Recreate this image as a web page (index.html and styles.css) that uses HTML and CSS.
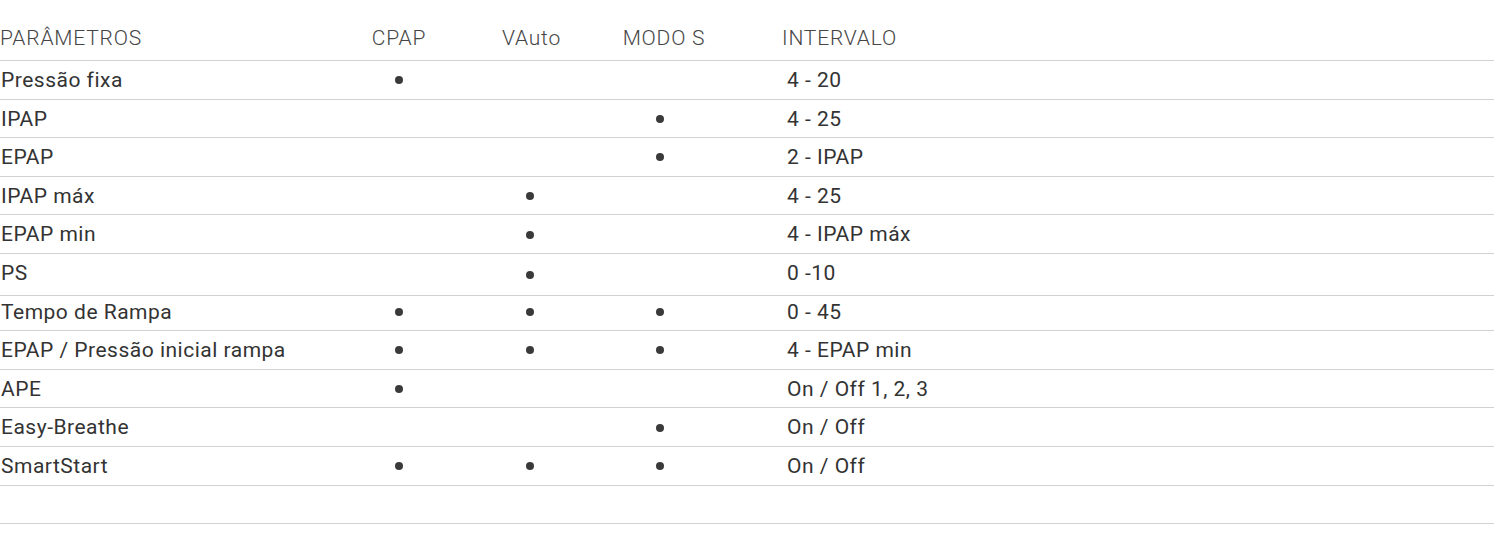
FILE: index.html
```html
<!DOCTYPE html>
<html lang="pt">
<head>
<meta charset="utf-8">
<title>Parâmetros</title>
<link rel="stylesheet" href="styles.css">
</head>
<body>
<div class="table">
  <div class="row head">
    <div class="c name">PARÂMETROS</div>
    <div class="c mode">CPAP</div>
    <div class="c mode m2">VAuto</div>
    <div class="c mode m3">MODO S</div>
    <div class="c range">INTERVALO</div>
  </div>
  <div class="row">
    <div class="c name">Pressão fixa</div>
    <div class="c mode"><span class="dot"></span></div>
    <div class="c mode"></div>
    <div class="c mode"></div>
    <div class="c range">4 - 20</div>
  </div>
  <div class="row">
    <div class="c name">IPAP</div>
    <div class="c mode"></div>
    <div class="c mode"></div>
    <div class="c mode"><span class="dot"></span></div>
    <div class="c range">4 - 25</div>
  </div>
  <div class="row">
    <div class="c name">EPAP</div>
    <div class="c mode"></div>
    <div class="c mode"></div>
    <div class="c mode"><span class="dot"></span></div>
    <div class="c range">2 - IPAP</div>
  </div>
  <div class="row">
    <div class="c name">IPAP máx</div>
    <div class="c mode"></div>
    <div class="c mode"><span class="dot"></span></div>
    <div class="c mode"></div>
    <div class="c range">4 - 25</div>
  </div>
  <div class="row">
    <div class="c name">EPAP min</div>
    <div class="c mode"></div>
    <div class="c mode"><span class="dot"></span></div>
    <div class="c mode"></div>
    <div class="c range">4 - IPAP máx</div>
  </div>
  <div class="row tall">
    <div class="c name">PS</div>
    <div class="c mode"></div>
    <div class="c mode"><span class="dot"></span></div>
    <div class="c mode"></div>
    <div class="c range">0 -10</div>
  </div>
  <div class="row short">
    <div class="c name">Tempo de Rampa</div>
    <div class="c mode"><span class="dot"></span></div>
    <div class="c mode"><span class="dot"></span></div>
    <div class="c mode"><span class="dot"></span></div>
    <div class="c range">0 - 45</div>
  </div>
  <div class="row">
    <div class="c name">EPAP / Pressão inicial rampa</div>
    <div class="c mode"><span class="dot"></span></div>
    <div class="c mode"><span class="dot"></span></div>
    <div class="c mode"><span class="dot"></span></div>
    <div class="c range">4 - EPAP min</div>
  </div>
  <div class="row">
    <div class="c name">APE</div>
    <div class="c mode"><span class="dot"></span></div>
    <div class="c mode"></div>
    <div class="c mode"></div>
    <div class="c range">On / Off 1, 2, 3</div>
  </div>
  <div class="row">
    <div class="c name">Easy-Breathe</div>
    <div class="c mode"></div>
    <div class="c mode"></div>
    <div class="c mode"><span class="dot"></span></div>
    <div class="c range">On / Off</div>
  </div>
  <div class="row">
    <div class="c name">SmartStart</div>
    <div class="c mode"><span class="dot"></span></div>
    <div class="c mode"><span class="dot"></span></div>
    <div class="c mode"><span class="dot"></span></div>
    <div class="c range">On / Off</div>
  </div>
  <div class="row">
    <div class="c name"></div>
    <div class="c mode"></div>
    <div class="c mode"></div>
    <div class="c mode"></div>
    <div class="c range"></div>
  </div>
</div>
</body>
</html>
```
FILE: styles.css
```css
html, body {
  margin: 0;
  padding: 0;
  background: #ffffff;
}

body {
  font-family: Roboto, "Liberation Sans", sans-serif;
  font-size: 21px;
  letter-spacing: 0.5px;
  color: #333333;
}

.table {
  display: flex;
  flex-direction: column;
  width: 100%;
}

.row {
  display: grid;
  grid-template-columns: 334px 130px 131px 130px 1fr;
  box-sizing: border-box;
  height: 38.6px;
  border-bottom: 1px solid #d2d2d2;
  line-height: 24px;
}

.row.tall {
  height: 41.6px;
}

.row.short {
  height: 35.6px;
}

.row.short .c {
  padding-top: 4px;
}

.row.short .mode {
  padding-top: 0;
  padding-bottom: 3px;
}

.row.head {
  height: 61px;
  font-weight: 300;
  letter-spacing: 0.8px;
  color: #454545;
}

.c {
  padding-top: 7px;
  white-space: nowrap;
}

.head .c {
  padding-top: 26px;
}

.name {
  padding-left: 1px;
}

.head .name {
  padding-left: 0;
}

.mode {
  display: flex;
  justify-content: center;
  align-items: center;
  padding-top: 0;
}

.head .mode {
  align-items: flex-start;
}

.head .m2 {
  padding-left: 4px;
}

.head .m3 {
  padding-left: 8px;
}

.range {
  padding-left: 62px;
}

.head .range {
  padding-left: 57px;
}

.dot {
  display: block;
  width: 8px;
  height: 8px;
  border-radius: 50%;
  background: #3a3a3a;
  margin-top: 1px;
}
```
